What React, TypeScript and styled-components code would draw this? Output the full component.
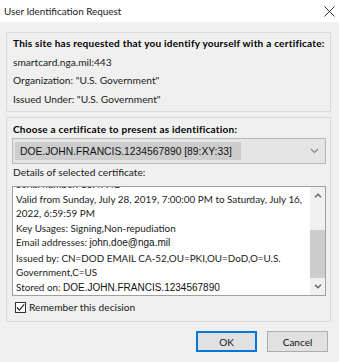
import * as React from 'react';
import styled, { createGlobalStyle } from 'styled-components';

const App = () => {
  const scrollRef = React.useRef<HTMLDivElement>(null);

  // the details box sits scrolled to its end, so "Serial number" is cut at the top
  React.useLayoutEffect(() => {
    const el = scrollRef.current;
    if (el) el.scrollTop = el.scrollHeight;
  }, []);

  return (
    <>
      <GlobalStyle />
      <Window>
        <TitleBar>
          <Title>User Identification Request</Title>
          <svg width="11" height="11" viewBox="0 0 11 11">
            <path d="M0.5 0.5 L10.5 10.5 M10.5 0.5 L0.5 10.5" stroke="#333" strokeWidth="1" />
          </svg>
        </TitleBar>

        <Body>
          <GroupBox>
            <Heading>
              This site has requested that you identify yourself with a certificate:
            </Heading>
            <InfoLine>smartcard.nga.mil:443</InfoLine>
            <InfoLine>Organization: "U.S. Government"</InfoLine>
            <InfoLine>Issued Under: "U.S. Government"</InfoLine>
          </GroupBox>

          <GroupBox $gap>
            <SectionHeading>Choose a certificate to present as identification:</SectionHeading>
            <Select>
              <Selected>DOE.JOHN.FRANCIS.1234567890 [89:XY:33]</Selected>
              <svg width="9" height="6" viewBox="0 0 9 6">
                <path d="M1 1 L4.5 4.5 L8 1" fill="none" stroke="#808080" strokeWidth="1.1" />
              </svg>
            </Select>
            <Label>Details of selected certificate:</Label>
            <DetailsBox>
              <DetailsText ref={scrollRef}>
                <DetailLine>
                  Issued to: CN=DOE.JOHN.FRANCIS.1234567890,OU=USA,
                  <br />
                  OU=PKI,OU=DoD,O=U.S. Government,C=US
                </DetailLine>
                <DetailLine>Serial number: 13:4F:4D</DetailLine>
                <DetailLine>
                  Valid from Sunday, July 28, 2019, 7:00:00 PM to Saturday, July 16,
                  <br />
                  2022, 6:59:59 PM
                </DetailLine>
                <DetailLine>Key Usages: Signing,Non-repudiation</DetailLine>
                <DetailLine>
                  Email addresses: <Pasted>john.doe@nga.mil</Pasted>
                </DetailLine>
                <DetailLine>
                  Issued by: CN=DOD EMAIL CA-52,OU=PKI,OU=DoD,O=U.S.
                  <br />
                  Government,C=US
                </DetailLine>
                <DetailLine>
                  Stored on: <Pasted>DOE.JOHN.FRANCIS.1234567890</Pasted>
                </DetailLine>
              </DetailsText>
              <ScrollBar>
                <ScrollArrow>
                  <svg width="8" height="5" viewBox="0 0 8 5">
                    <path d="M1 4.2 L4 1.2 L7 4.2" fill="none" stroke="#606060" strokeWidth="1.3" />
                  </svg>
                </ScrollArrow>
                <Track>
                  <Thumb $top={26} $size={48} />
                </Track>
                <ScrollArrow>
                  <svg width="8" height="5" viewBox="0 0 8 5">
                    <path d="M1 0.8 L4 3.8 L7 0.8" fill="none" stroke="#606060" strokeWidth="1.3" />
                  </svg>
                </ScrollArrow>
              </ScrollBar>
            </DetailsBox>
            <CheckRow>
              <CheckBox>
                <svg width="9" height="9" viewBox="0 0 9 9">
                  <path d="M0.8 4.5 L3.4 7.2 L8.2 1.4" fill="none" stroke="#222" strokeWidth="1.1" />
                </svg>
              </CheckBox>
              Remember this decision
            </CheckRow>
          </GroupBox>

          <ButtonRow>
            <Button $default>OK</Button>
            <Button>Cancel</Button>
          </ButtonRow>
        </Body>
      </Window>
    </>
  );
};

const GlobalStyle = createGlobalStyle`
  body {
    margin: 0;
    background: #f0f0f0;
    font-family: Lato, "Noto Sans", sans-serif;
    font-size: 10.2px;
    color: #000;
  }
`;

const Window = styled.div`
  width: 339px;
  height: 362px;
  display: flex;
  flex-direction: column;
  background: #f0f0f0;
  overflow: hidden;
`;

const TitleBar = styled.div`
  height: 22px;
  flex-shrink: 0;
  display: flex;
  align-items: center;
  justify-content: space-between;
  padding: 0 4px 0 4px;
  background: #fff;
`;

const Title = styled.div`
  font-size: 9.9px;
  color: #1a1a1a;
`;

const Body = styled.div`
  display: flex;
  flex-direction: column;
  padding: 10px 8px 0 6px;
`;

const GroupBox = styled.div<{ $gap?: boolean }>`
  display: flex;
  flex-direction: column;
  border: 1px solid #dadada;
  padding: 1px 4px 3px 5px;
  margin-top: ${(p) => (p.$gap ? '5px' : '0')};
`;

const Heading = styled.div`
  font-weight: bold;
  font-size: 10px;
  letter-spacing: 0.24px;
  line-height: 18.5px;
  padding-left: 1px;
  white-space: nowrap;
`;

const InfoLine = styled.div`
  line-height: 18.5px;
  padding-left: 1px;
  color: #1a1a1a;
`;

const SectionHeading = styled(Heading)`
  line-height: 15px;
  padding: 3px 0 0 1px;
`;

const Select = styled.div`
  height: 24px;
  margin-top: 1px;
  display: flex;
  align-items: center;
  justify-content: space-between;
  padding: 0 6px 0 2px;
  background: #e5e5e5;
  border: 1px solid #b8b8b8;
`;

const Selected = styled.span`
  display: flex;
  align-items: center;
  height: 18px;
  width: 226px;
  padding-left: 5px;
  box-sizing: border-box;
  white-space: nowrap;
  background: #cdcdcd;
  font-family: "Liberation Sans", Arial, sans-serif;
  font-size: 10.3px;
  color: #111;
`;

const Label = styled.div`
  line-height: 16px;
  padding-left: 1px;
  color: #1a1a1a;
`;

const DetailsBox = styled.div`
  height: 110px;
  margin-top: 6px;
  display: flex;
  border: 1px solid #a0a0a0;
  background: #fff;
  box-sizing: border-box;
`;

const DetailsText = styled.div`
  flex: 1;
  overflow-y: scroll;
  scrollbar-width: none;
  padding: 0 4px 0 3px;
  font-size: 9.9px;
  line-height: 14.5px;
  white-space: nowrap;
  color: #1a1a1a;
  &::-webkit-scrollbar {
    display: none;
  }
`;

const DetailLine = styled.div``;

const Pasted = styled.span`
  font-family: "Liberation Sans", Arial, sans-serif;
  font-size: 10px;
  color: #111;
`;

const ScrollBar = styled.div`
  width: 15px;
  display: flex;
  flex-direction: column;
  background: #f0f0f0;
`;

const ScrollArrow = styled.div`
  height: 17px;
  display: flex;
  align-items: center;
  justify-content: center;
`;

const Track = styled.div`
  flex: 1;
  display: flex;
  flex-direction: column;
`;

const Thumb = styled.div<{ $top: number; $size: number }>`
  margin-top: ${(p) => p.$top}px;
  height: ${(p) => p.$size}px;
  background: #cdcdcd;
`;

const CheckRow = styled.div`
  display: flex;
  align-items: center;
  gap: 3px;
  height: 22px;
  padding-left: 3px;
  color: #1a1a1a;
`;

const CheckBox = styled.div`
  width: 9px;
  height: 9px;
  border: 1px solid #333;
  background: #fff;
  display: flex;
`;

const ButtonRow = styled.div`
  display: flex;
  justify-content: flex-end;
  gap: 10px;
  margin-top: 9px;
  padding-right: 3px;
`;

const Button = styled.button<{ $default?: boolean }>`
  width: 61px;
  height: 21px;
  padding: 0;
  font-family: inherit;
  font-size: 10px;
  color: #111;
  background: #e1e1e1;
  border: 1px solid ${(p) => (p.$default ? '#0078d7' : '#adadad')};
  box-shadow: ${(p) => (p.$default ? 'inset 0 0 0 1px #0078d7' : 'none')};
`;

export default App;
